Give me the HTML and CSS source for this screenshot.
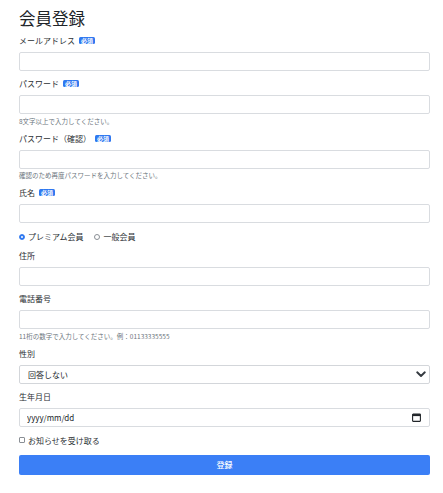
FILE: index.html
```html
<!DOCTYPE html>
<html lang="ja">
<head>
<meta charset="utf-8">
<title>会員登録</title>
<link rel="stylesheet" href="styles.css">
</head>
<body>
<main class="page">
  <h1 class="title">会員登録</h1>
  <form class="form">
    <div class="group">
      <label class="label">メールアドレス<span class="badge">必須</span></label>
      <input class="field" type="email">
    </div>
    <div class="group">
      <label class="label">パスワード<span class="badge">必須</span></label>
      <input class="field" type="password">
      <p class="hint">8文字以上で入力してください。</p>
    </div>
    <div class="group">
      <label class="label">パスワード（確認）<span class="badge">必須</span></label>
      <input class="field" type="password">
      <p class="hint">確認のため再度パスワードを入力してください。</p>
    </div>
    <div class="group">
      <label class="label">氏名<span class="badge">必須</span></label>
      <input class="field" type="text">
    </div>
    <div class="choice-row">
      <label class="choice"><input class="radio" type="radio" name="plan" checked>プレミアム会員</label>
      <label class="choice"><input class="radio" type="radio" name="plan">一般会員</label>
    </div>
    <div class="group">
      <label class="label">住所</label>
      <input class="field" type="text">
    </div>
    <div class="group">
      <label class="label">電話番号</label>
      <input class="field" type="tel">
      <p class="hint">11桁の数字で入力してください。例：01133335555</p>
    </div>
    <div class="group">
      <label class="label">性別</label>
      <div class="control">
        <select class="field select"><option>回答しない</option></select>
        <svg class="chevron" viewBox="0 0 10 7" width="10" height="7"><path d="M1.2 1.3 L5 5 L8.8 1.3" fill="none" stroke="#343a40" stroke-width="1.9" stroke-linecap="round" stroke-linejoin="round"/></svg>
      </div>
    </div>
    <div class="group">
      <label class="label">生年月日</label>
      <div class="control">
        <input class="field date" type="text" placeholder="yyyy/mm/dd">
        <svg class="calendar" viewBox="0 0 9 9" width="9" height="9"><rect x="0.6" y="1.1" width="7.8" height="7.3" rx="0.6" fill="none" stroke="#212529" stroke-width="1.1"/><rect x="0.6" y="1.1" width="7.8" height="2" fill="#212529"/></svg>
      </div>
    </div>
    <div class="choice-row">
      <label class="choice"><input class="check" type="checkbox">お知らせを受け取る</label>
    </div>
    <button class="submit" type="button">登録</button>
  </form>
</main>
</body>
</html>
```
FILE: styles.css
```css
* { box-sizing: border-box; }
body {
  margin: 0;
  background: #fff;
  color: #212529;
  font-family: "Noto Sans CJK JP", "Noto Sans", sans-serif;
}
.page {
  padding: 9px 13px 0 19px;
}
.title {
  margin: 0 0 7px;
  font-size: 16.5px;
  line-height: 19px;
  font-weight: 400;
  color: #212529;
}
.form {
  display: flex;
  flex-direction: column;
  gap: 7px;
}
.group {
  display: flex;
  flex-direction: column;
}
.label {
  display: flex;
  align-items: center;
  font-size: 8px;
  line-height: 11px;
  height: 11px;
  margin-bottom: 6px;
  color: #2b2f33;
}
.badge {
  margin-left: 4px;
  background: #2f78f0;
  color: #fff;
  font-size: 6px;
  line-height: 7px;
  font-weight: 700;
  padding: 0 2px;
  border-radius: 1.5px;
}
.field {
  display: block;
  width: 100%;
  height: 19px;
  margin: 0;
  border: 1px solid #d9dce0;
  border-radius: 2px;
  background: #fff;
  padding: 0 7px;
  font-family: inherit;
  font-size: 8px;
  color: #212529;
  outline: none;
}
.hint {
  margin: 2.5px 0 0;
  font-size: 6.5px;
  line-height: 9px;
  color: #6c757d;
}
.choice-row {
  display: flex;
  align-items: center;
  gap: 11px;
  height: 13px;
}
.choice {
  display: flex;
  align-items: center;
  gap: 3px;
  font-size: 8px;
  color: #2b2f33;
}
.radio, .check {
  appearance: none;
  -webkit-appearance: none;
  margin: 0;
  width: 6px;
  height: 6px;
  border: 0.8px solid #8a8f95;
  background: #fff;
}
.radio { border-radius: 50%; }
.radio:checked {
  border-color: #2f78f0;
  background: radial-gradient(circle, #fff 0 0.6px, #2f78f0 1px);
}
.check { border-radius: 1px; }
.control {
  position: relative;
  display: flex;
}
.select {
  appearance: none;
  -webkit-appearance: none;
  padding-left: 8px;
  border-color: #d3d6da;
}
.chevron {
  position: absolute;
  right: 4px;
  top: 6px;
  pointer-events: none;
}
.date::placeholder { color: #212529; opacity: 1; }
.date { padding-left: 7px; }
.calendar {
  position: absolute;
  right: 9px;
  top: 5px;
  pointer-events: none;
}
.submit {
  display: block;
  margin-top: 1px;
  height: 20px;
  width: 100%;
  border: none;
  border-radius: 2px;
  background: #3b7ff6;
  color: #fff;
  font-family: inherit;
  font-size: 8px;
  font-weight: 500;
}
```
